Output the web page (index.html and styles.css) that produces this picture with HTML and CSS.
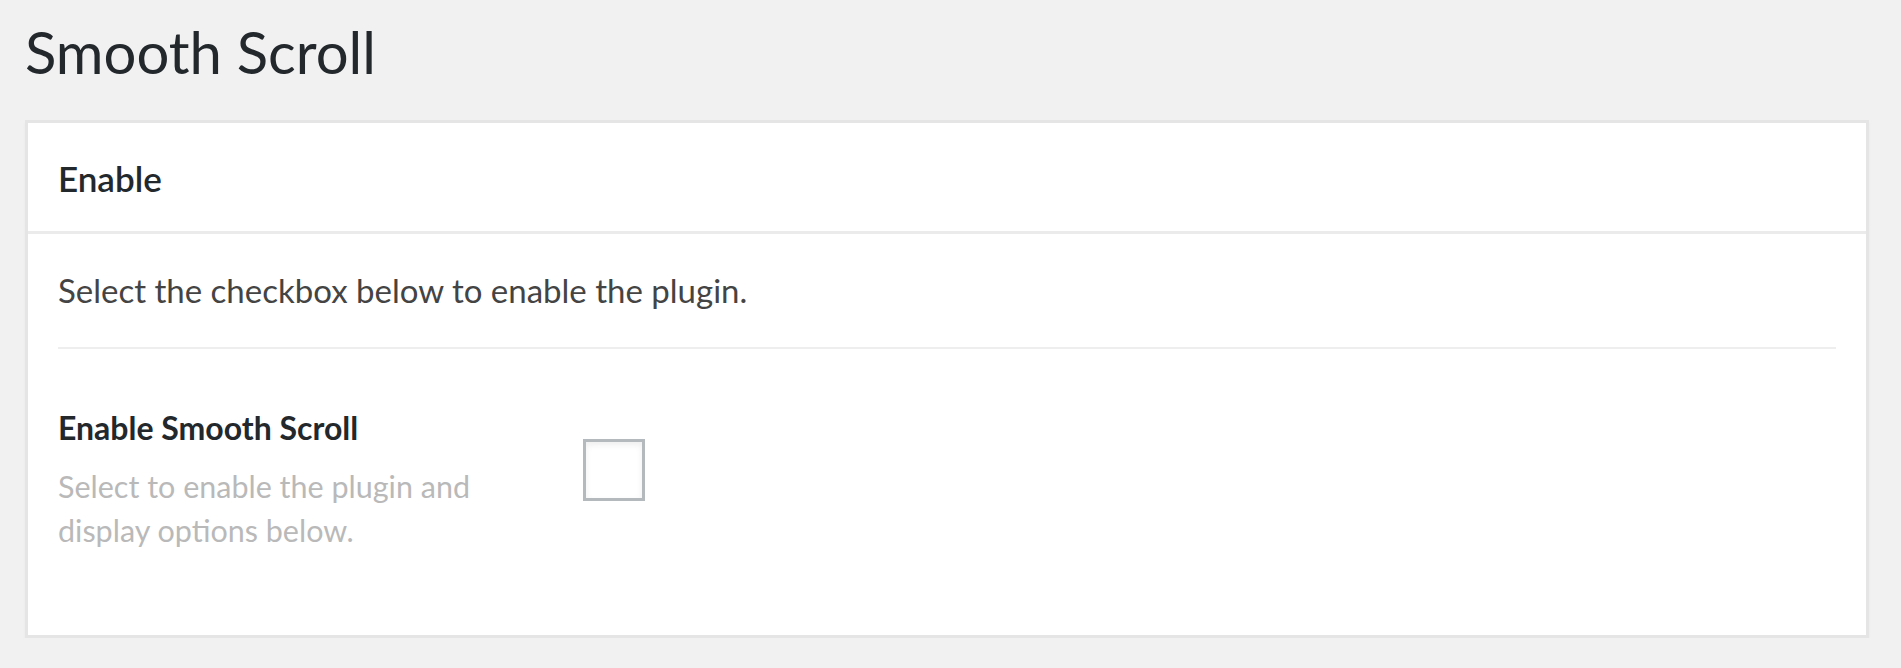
FILE: index.html
```html
<!DOCTYPE html>
<html lang="en">
<head>
  <meta charset="UTF-8">
  <meta name="viewport" content="width=device-width, initial-scale=1.0">
  <title>Smooth Scroll</title>
  <link rel="stylesheet" href="styles.css">
</head>
<body>

<div class="wrap">
  <h1>Smooth Scroll</h1>

  <div class="card">
    <div class="card-header">
      <h2>Enable</h2>
    </div>
    <div class="card-body">
      <p class="intro">Select the checkbox below to enable the plugin.</p>
      <hr>
      <div class="field">
        <div class="field-label">
          <label for="enable-scroll">Enable Smooth Scroll</label>
          <p class="description">Select to enable the plugin and display options below.</p>
        </div>
        <div class="field-input">
          <input id="enable-scroll" type="checkbox">
        </div>
      </div>
    </div>
  </div>
</div>

</body>
</html>
```
FILE: styles.css
```css
body {
  margin: 0;
  background-color: #f1f1f1;
  font-family: Lato, "Open Sans", sans-serif;
  color: #23282d;
}

.wrap {
  padding: 14px 32px 0 25px;
}

h1 {
  margin: 0 0 30px;
  font-size: 58px;
  font-weight: 400;
  line-height: 76px;
  color: #23282d;
}

.card {
  background-color: #fff;
  border: 3px solid #e5e5e5;
  box-shadow: 0 3px 3px rgba(0, 0, 0, 0.04);
}

.card-header {
  padding: 34px 30px 32px;
  border-bottom: 3px solid #ebebeb;
}

.card-header h2 {
  margin: 0;
  font-size: 35px;
  font-weight: 600;
  line-height: 42px;
}

.card-body {
  padding: 32px 30px 83px;
}

.intro {
  margin: 0;
  font-size: 33px;
  line-height: 48px;
  color: #444;
}

hr {
  margin: 33px 0 0;
  border: 0;
  border-top: 2px solid #eee;
}

.field {
  display: grid;
  grid-template-columns: 525px auto;
  margin-top: 59px;
}

.field-label label {
  display: block;
  font-size: 32px;
  font-weight: 700;
  line-height: 40px;
}

.description {
  max-width: 440px;
  margin: 16px 0 0;
  font-size: 30.5px;
  line-height: 44px;
  color: #b9b9b9;
}

.field-input input {
  -webkit-appearance: none;
  appearance: none;
  box-sizing: border-box;
  width: 62px;
  height: 62px;
  margin: 31px 0 0;
  border: 3px solid #b4b9be;
  background-color: #fff;
  box-shadow: inset 0 3px 6px rgba(0, 0, 0, 0.07);
  cursor: pointer;
}
```
